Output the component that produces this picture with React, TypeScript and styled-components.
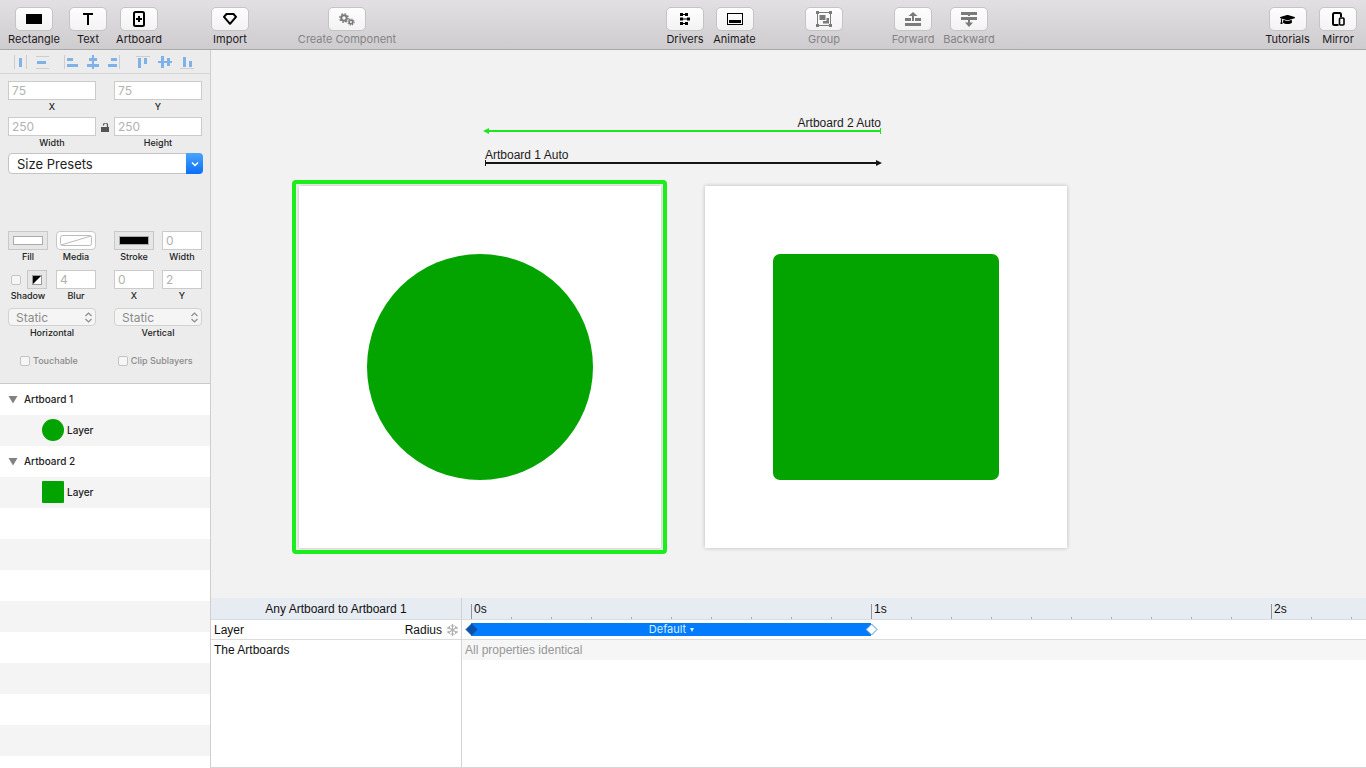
import React from "react";
import styled, { createGlobalStyle, css } from "styled-components";
import { FaGraduationCap } from "react-icons/fa";

const GlobalStyle = createGlobalStyle`
  *, *::before, *::after { box-sizing: border-box; }
  body { margin: 0; background: #fff; }
  button, input, select { font: inherit; color: inherit; margin: 0; }
`;

const ui = `Inter, "Liberation Sans", sans-serif`;
const helvetica = `"Liberation Sans", Arial, sans-serif`;
const GREEN = "#04a400";

const Page = styled.div`
  display: flex;
  flex-direction: column;
  min-height: 100vh;
  font-family: ${ui};
  font-size: 11px;
  color: #111;
`;

/* ---------- toolbar ---------- */

const Toolbar = styled.header`
  display: flex;
  justify-content: space-between;
  height: 50px;
  padding: 7px 9px 0 8px;
  background: linear-gradient(#e3e0e3, #cfcccf);
  border-bottom: 1px solid #a9a8a9;
`;

const ToolSection = styled.div`
  display: flex;
  gap: 49px;
`;

const ToolGroup = styled.div`
  display: flex;
  gap: 9px;
`;

const ToolButton = styled.button<{ $width: number }>`
  display: flex;
  flex-direction: column;
  align-items: center;
  gap: 1px;
  width: ${(p) => p.$width}px;
  padding: 0;
  border: 0;
  background: none;
  font-size: 11px;
  line-height: 14px;
  white-space: nowrap;
  color: #1c1a1c;
  &:disabled { color: #858385; }
`;

const ToolFace = styled.span`
  display: flex;
  align-items: center;
  justify-content: center;
  width: 38px;
  height: 24px;
  border: 1px solid #c6c3c6;
  border-radius: 5px;
  background: linear-gradient(#fefefe, #f4f3f4);
  color: #000;
  ${ToolButton}:disabled & { color: #7b7b7b; }
`;

const ToolLabel = styled.span`
  display: flex;
  justify-content: center;
  width: 0;
`;

function Tool(props: { label: string; width: number; disabled?: boolean; children: React.ReactNode }) {
  return (
    <ToolButton type="button" $width={props.width} disabled={props.disabled}>
      <ToolFace>{props.children}</ToolFace>
      <ToolLabel>{props.label}</ToolLabel>
    </ToolButton>
  );
}

const RectangleIcon = () => (
  <svg width="16" height="12" viewBox="0 0 16 12"><rect y="1" width="16" height="10" fill="currentColor" /></svg>
);
const TextIcon = () => (
  <svg width="12" height="14" viewBox="0 0 12 14"><path d="M1 2h10M6 2v11" stroke="currentColor" strokeWidth="2" fill="none" /></svg>
);
const ArtboardIcon = () => (
  <svg width="12" height="16" viewBox="0 0 12 16" fill="none" stroke="currentColor" strokeWidth="2">
    <rect x="1" y="1" width="10" height="14" rx="1.5" />
    <path d="M6 5v6M3 8h6" />
  </svg>
);
const ImportIcon = () => (
  <svg width="14" height="12" viewBox="0 0 14 12" fill="none" stroke="currentColor" strokeWidth="2" strokeLinejoin="round">
    <path d="M3.500 1h7L13 3.800 7 10.800 1 3.800z" />
  </svg>
);
const GearsIcon = () => (
  <svg width="16" height="13" viewBox="0 0 16 13" fill="none" stroke="currentColor">
    <circle cx="5" cy="5" r="2.700" strokeWidth="2" />
    <circle cx="5" cy="5" r="4.200" strokeWidth="1.400" strokeDasharray="1.700 1.600" />
    <circle cx="12" cy="9" r="1.800" strokeWidth="1.600" />
    <circle cx="12" cy="9" r="3" strokeWidth="1.200" strokeDasharray="1.300 1.056" />
  </svg>
);
const DriversIcon = () => (
  <svg width="12" height="14" viewBox="0 0 12 14" fill="currentColor">
    <path d="M1 2h8v1H1zM1 6.500h9v1H1zM1 11h8v1H1z" />
    <path d="M1 1h3v3H1zM6 1h3v3H6zM1 5.500h3v3H1zM8 5.500h3v3H8zM1 10h3v3H1zM6 10h3v3H6z" />
  </svg>
);
const AnimateIcon = () => (
  <svg width="16" height="12" viewBox="0 0 16 12">
    <rect x=".5" y=".5" width="15" height="11" fill="none" stroke="currentColor" />
    <rect x="2" y="7" width="12" height="3" fill="currentColor" />
  </svg>
);
const GroupIcon = () => (
  <svg width="16" height="16" viewBox="0 0 16 16" fill="currentColor">
    <rect x="1.500" y="1.500" width="13" height="13" fill="none" stroke="currentColor" />
    <path d="M0 0h3v3H0zM13 0h3v3h-3zM0 13h3v3H0zM13 13h3v3h-3z" />
    <path d="M3.500 4h6v5h-6z" />
    <path d="M10.500 7h2.500v5.500H7V10h3.500z" />
  </svg>
);
const ForwardIcon = () => (
  <svg width="16" height="14" viewBox="0 0 16 14" fill="currentColor">
    <path d="M8 0l4.500 4H9v5H7V4H3.500z" />
    <path d="M0 6h6v3H0zM10 6h6v3h-6zM0 11h16v3H0z" />
  </svg>
);
const BackwardIcon = () => (
  <svg width="16" height="15" viewBox="0 0 16 15" fill="currentColor">
    <path d="M0 0h16v3H0zM0 5h16v3H0z" />
    <path d="M7 3h2v1H7zM7 8h2v2.500h3L8 15l-4-4.500h3z" />
  </svg>
);
const MirrorIcon = () => (
  <svg width="13" height="14" viewBox="0 0 13 14" fill="none" stroke="currentColor" strokeWidth="2">
    <path d="M6.500 13H2.500A1.500 1.500 0 0 1 1 11.500v-9A1.500 1.500 0 0 1 2.500 1h5A1.500 1.500 0 0 1 9 2.500V5" />
    <rect x="7.500" y="6" width="4.500" height="7" rx="1" strokeWidth="1.600" />
  </svg>
);

/* ---------- inspector ---------- */

const Workspace = styled.div`
  display: flex;
  flex: 1;
`;

const Sidebar = styled.aside`
  display: flex;
  flex-direction: column;
  width: 211px;
  flex: none;
  border-right: 1px solid #cfcfcf;
  background: #ececec;
`;

const AlignBar = styled.div`
  display: flex;
  align-items: center;
  gap: 14px;
  height: 24px;
  padding: 0 14px;
  border-bottom: 1px solid #d5d5d5;
`;

const AlignGroup = styled.div`
  display: flex;
  gap: 8px;
`;

const IconButton = styled.button`
  display: flex;
  padding: 0;
  border: 0;
  background: none;
`;

type Bar = [number, number, number, number];
const alignGroups: { name: string; grey: Bar[]; blue: Bar[] }[][] = [
  [
    { name: "Distribute horizontally", grey: [[0, 0, 1, 14], [12, 0, 1, 14]], blue: [[5, 3, 3, 9]] },
    { name: "Distribute vertically", grey: [[0, 1, 13, 1], [0, 13, 13, 1]], blue: [[1, 6, 9, 3]] },
  ],
  [
    { name: "Align left", grey: [[0, 0, 1, 14]], blue: [[3, 3, 6, 3], [3, 9, 11, 3]] },
    { name: "Align centre", grey: [], blue: [[3, 3, 8, 3], [1, 9, 12, 3], [6, 0, 2, 14]] },
    { name: "Align right", grey: [[11, 0, 1, 14]], blue: [[3, 3, 6, 3], [0, 9, 9, 3]] },
  ],
  [
    { name: "Align top", grey: [[0, 1, 14, 1]], blue: [[2, 3, 3, 10], [8, 3, 3, 6]] },
    { name: "Align middle", grey: [], blue: [[3, 1, 3, 12], [9, 3, 3, 8], [0, 6, 14, 2]] },
    { name: "Align bottom", grey: [[0, 13, 14, 1]], blue: [[3, 2, 3, 10], [9, 6, 3, 6]] },
  ],
];

const Inspector = styled.div`
  display: flex;
  flex-direction: column;
  height: 310px;
  padding: 7px 8px 0;
  border-bottom: 1px solid #c9c9c9;
`;

const Columns = styled.div<{ $top?: number }>`
  display: grid;
  grid-template-columns: 1fr 18px 1fr;
  margin-top: ${(p) => p.$top ?? 0}px;
`;

const Quad = styled.div<{ $top: number }>`
  display: grid;
  grid-template-columns: 40px 40px 2px 40px 40px;
  column-gap: 8px;
  margin-top: ${(p) => p.$top}px;
  & > :nth-child(3) { grid-column: 4; }
`;

const Field = styled.div`
  display: flex;
  flex-direction: column;
  align-items: center;
  gap: 1px;
`;

const Caption = styled.label`
  font-size: 9px;
  line-height: 12px;
  white-space: nowrap;
  font-weight: 500;
  color: #222;
`;

const TextBox = styled.input`
  width: 100%;
  height: 19px;
  padding: 0 3px;
  border: 1px solid #cbcbcb;
  border-radius: 0;
  background: #fff;
  font-size: 12px;
  color: #b2b2b2;
  outline: none;
`;

const Lock = styled.span`
  display: flex;
  justify-content: center;
  padding-top: 6px;
`;

const SelectWrap = styled.div<{ $top?: number }>`
  position: relative;
  width: 100%;
  margin-top: ${(p) => p.$top ?? 0}px;
`;

const selectReset = css`
  appearance: none;
  width: 100%;
  outline: none;
  display: block;
`;

const PresetSelect = styled.select`
  ${selectReset}
  height: 21px;
  padding: 0 8px;
  border: 1px solid #c4c4c4;
  border-radius: 4px;
  background: #fff;
  font-size: 13px;
  color: #222;
`;

const PresetArrow = styled.span`
  position: absolute;
  inset: 0 -1px 0 auto;
  display: flex;
  align-items: center;
  justify-content: center;
  width: 17px;
  border-radius: 0 4px 4px 0;
  background: linear-gradient(#4ba4fa, #0a6ff8);
  pointer-events: none;
`;

const MiniSelect = styled.select`
  ${selectReset}
  height: 18px;
  padding: 0 7px;
  border: 1px solid #d2d2d2;
  border-radius: 4px;
  background: #f5f5f5;
  font-size: 12px;
  color: #8b8b8b;
`;

const Stepper = styled.svg`
  position: absolute;
  top: 4px;
  right: 3px;
  pointer-events: none;
`;

const Well = styled.button<{ $round?: boolean; $width?: number }>`
  display: flex;
  align-items: center;
  justify-content: center;
  width: ${(p) => p.$width ?? 40}px;
  height: 19px;
  padding: 0;
  border: 1px solid #c8c8c8;
  border-radius: ${(p) => (p.$round ? 4 : 0)}px;
  background: ${(p) => (p.$round ? "#fdfdfd" : "#e6e6e6")};
`;

const Swatch = styled.span<{ $color: string }>`
  width: 30px;
  height: 9px;
  border: 1px solid #aaa;
  background: ${(p) => p.$color};
`;

const ShadowControls = styled.div`
  display: flex;
  align-items: center;
  justify-content: space-between;
  width: 100%;
  height: 19px;
  padding: 0 1px 0 3px;
`;

const TickBox = styled.input`
  appearance: none;
  width: 10px;
  height: 10px;
  border: 1px solid #c3c3c3;
  border-radius: 2px;
  background: #f6f6f6;
`;

const TickRow = styled.div`
  display: flex;
  gap: 40px;
  margin-top: 15px;
  padding-left: 12px;
`;

const TickLabel = styled.label`
  display: flex;
  align-items: center;
  gap: 3px;
  font-size: 9px;
  line-height: 14px;
  white-space: nowrap;
  font-weight: 500;
  color: #8b8b8b;
`;

/* ---------- layer list ---------- */

const LayerList = styled.ul`
  flex: 1;
  margin: 0;
  padding: 0;
  list-style: none;
  background: repeating-linear-gradient(#fff 0 31px, #f4f4f4 31px 62px);
`;

const LayerRow = styled.li<{ $depth: number }>`
  display: flex;
  align-items: center;
  gap: ${(p) => (p.$depth ? 3 : 6)}px;
  height: 31px;
  padding: 0 0 1px ${(p) => (p.$depth ? 42 : 8)}px;
  font-size: 10px;
  font-weight: 500;
  color: #222;
`;

const Thumb = styled.span<{ $round?: boolean }>`
  width: 22px;
  height: 22px;
  border-radius: ${(p) => (p.$round ? "50%" : "1px")};
  background: ${GREEN};
`;

/* ---------- canvas ---------- */

const Main = styled.main`
  display: flex;
  flex-direction: column;
  flex: 1;
  min-width: 0;
`;

const Canvas = styled.section`
  position: relative;
  flex: 1;
  min-height: 520px;
  overflow: hidden;
  background: #f2f2f2;
  font-family: ${helvetica};
  font-size: 12px;
  line-height: 14px;
`;

const Artboard = styled.div<{ $x: number }>`
  position: absolute;
  left: ${(p) => p.$x}px;
  top: 136px;
  display: flex;
  align-items: center;
  justify-content: center;
  width: 362px;
  height: 362px;
  background: #fff;
  box-shadow: 0 0 4px rgba(0, 0, 0, 0.24);
`;

const Selection = styled.div`
  position: absolute;
  inset: -6px -6px -6px -7px;
  border: 4px solid #1bee1b;
  border-radius: 4px;
`;

const Shape = styled.div<{ $round?: boolean }>`
  width: 226px;
  height: 226px;
  border-radius: ${(p) => (p.$round ? "50%" : "7px")};
  background: ${GREEN};
`;

const Transition = styled.div<{ $y: number; $end?: boolean }>`
  position: absolute;
  left: 272px;
  top: ${(p) => p.$y}px;
  display: flex;
  flex-direction: column;
  align-items: ${(p) => (p.$end ? "flex-end" : "flex-start")};
  width: 400px;
  color: #1c1c1c;
`;

const TransitionName = styled.span`
  height: 12px;
  padding: 0 2px;
`;

/* ---------- timeline ---------- */

const Timeline = styled.section`
  display: grid;
  grid-template-columns: 251px 1fr;
  grid-template-rows: 22px 20px 20px 1fr;
  height: 170px;
  background: #fff;
  border-bottom: 1px solid #d6d6d6;
  font-family: ${helvetica};
  font-size: 12px;
`;

const HeadCell = styled.div`
  display: flex;
  align-items: center;
  justify-content: center;
  border-right: 1px solid #d0d2d4;
  border-bottom: 1px solid #d9dde0;
  background: #e6ecf1;
`;

const Ruler = styled.div`
  display: flex;
  min-width: 0;
  padding-left: 9px;
  border-bottom: 1px solid #d9dde0;
  background: #e6ecf1;
`;

const Second = styled.div`
  flex: none;
  width: 400px;
  height: 21px;
  padding: 4px 0 0 3px;
  line-height: 14px;
  background:
    linear-gradient(#929598, #929598) 0 6px / 1px 15px no-repeat,
    repeating-linear-gradient(90deg, #a9acaf 0 1px, transparent 1px 40px) 0 19px / 100% 2px no-repeat;
  &:last-child { flex: 1; width: auto; }
`;

const NameCell = styled.div<{ $line?: boolean }>`
  display: flex;
  align-items: center;
  justify-content: space-between;
  padding: 0 3px;
  border-right: 1px solid #d4d4d4;
  border-bottom: ${(p) => (p.$line ? "1px solid #dcdcdc" : "0")};
`;

const Property = styled.span`
  display: flex;
  align-items: center;
  gap: 5px;
`;

const Track = styled.div<{ $line?: boolean; $muted?: boolean }>`
  display: flex;
  align-items: center;
  padding-left: 3px;
  border-bottom: ${(p) => (p.$line ? "1px solid #dcdcdc" : "0")};
  background: ${(p) => (p.$muted ? "#f6f6f6" : "#fff")};
  color: #969696;
`;

const Clip = styled.div`
  display: flex;
  align-items: center;
  justify-content: space-between;
  width: 413px;
  height: 13px;
  background: linear-gradient(#027bfc, #027bfc) 6px 0 / 400px 13px no-repeat;
`;

const EaseButton = styled.button`
  display: flex;
  align-items: center;
  gap: 4px;
  height: 13px;
  padding: 0;
  border: 0;
  background: none;
  font-family: ${ui};
  font-size: 11px;
  line-height: 13px;
  color: #d9f0ff;
`;

const Diamond = ({ fill, stroke }: { fill: string; stroke: string }) => (
  <svg width="13" height="13" viewBox="0 0 13 13"><path d="M6.500 1l5.500 5.500-5.500 5.500L1 6.500z" fill={fill} stroke={stroke} /></svg>
);

const Snowflake = () => (
  <svg width="11" height="12" viewBox="0 0 11 12" fill="none" stroke="#b0b0b0">
    <path d="M5.500 0v12M.5 3l10 6M10.500 3l-10 6" strokeWidth="1.200" />
    <path d="M3.500 1l2 2 2-2M3.500 11l2-2 2 2M.3 4.800l2-.8.200-2M10.700 4.800l-2-.8-.2-2M.3 7.200l2 .8.200 2M10.700 7.200l-2 .8-.2 2" />
  </svg>
);

function NumberField({ id, label, value }: { id: string; label: string; value: string }) {
  return (
    <Field>
      <TextBox id={id} defaultValue={value} />
      <Caption htmlFor={id}>{label}</Caption>
    </Field>
  );
}

function StaticSelect({ id, label }: { id: string; label: string }) {
  return (
    <Field>
      <SelectWrap>
        <MiniSelect id={id}><option>Static</option></MiniSelect>
        <Stepper width="9" height="11" viewBox="0 0 9 11" fill="none" stroke="#8c8c8c" strokeWidth="1.200">
          <path d="M1.500 4l3-3 3 3M1.500 7l3 3 3-3" />
        </Stepper>
      </SelectWrap>
      <Caption htmlFor={id}>{label}</Caption>
    </Field>
  );
}

function LayerGroup({ name, round }: { name: string; round?: boolean }) {
  return (
    <>
      <LayerRow $depth={0}>
        <svg width="10" height="9" viewBox="0 0 10 9"><path d="M.5 1h9L5 8.500z" fill="#828282" /></svg>
        {name}
      </LayerRow>
      <LayerRow $depth={1}><Thumb $round={round} />Layer</LayerRow>
    </>
  );
}

export default function App() {
  return (
    <Page>
      <GlobalStyle />
      <Toolbar>
        <ToolSection>
          <ToolGroup>
            <Tool label="Rectangle" width={52}><RectangleIcon /></Tool>
            <Tool label="Text" width={38}><TextIcon /></Tool>
            <Tool label="Artboard" width={46}><ArtboardIcon /></Tool>
          </ToolGroup>
          <Tool label="Import" width={38}><ImportIcon /></Tool>
          <Tool label="Create Component" width={98} disabled><GearsIcon /></Tool>
        </ToolSection>
        <ToolSection>
          <ToolGroup>
            <Tool label="Drivers" width={38}><DriversIcon /></Tool>
            <Tool label="Animate" width={43}><AnimateIcon /></Tool>
          </ToolGroup>
          <Tool label="Group" width={38} disabled><GroupIcon /></Tool>
          <ToolGroup>
            <Tool label="Forward" width={42} disabled><ForwardIcon /></Tool>
            <Tool label="Backward" width={52} disabled><BackwardIcon /></Tool>
          </ToolGroup>
        </ToolSection>
        <ToolGroup>
          <Tool label="Tutorials" width={45}><FaGraduationCap size={15} /></Tool>
          <Tool label="Mirror" width={38}><MirrorIcon /></Tool>
        </ToolGroup>
      </Toolbar>

      <Workspace>
        <Sidebar>
          <AlignBar>
            {alignGroups.map((group, i) => (
              <AlignGroup key={i}>
                {group.map((a) => (
                  <IconButton key={a.name} type="button" aria-label={a.name}>
                    <svg width="14" height="14" viewBox="0 0 14 14">
                      {a.grey.map(([x, y, w, h], k) => <rect key={k} x={x} y={y} width={w} height={h} fill="#cdcdcd" />)}
                      {a.blue.map(([x, y, w, h], k) => <rect key={k} x={x} y={y} width={w} height={h} fill="#7fb2e8" />)}
                    </svg>
                  </IconButton>
                ))}
              </AlignGroup>
            ))}
          </AlignBar>
          <Inspector>
            <Columns>
              <NumberField id="x" label="X" value="75" />
              <span />
              <NumberField id="y" label="Y" value="75" />
            </Columns>
            <Columns $top={4}>
              <NumberField id="width" label="Width" value="250" />
              <Lock>
                <svg width="8" height="9" viewBox="0 0 8 9"><path d="M0 4h8v5H0z" fill="#555" /><path d="M2.500 2.500V2a2 2 0 0 1 4 0v2" fill="none" stroke="#555" strokeWidth="1.200" /></svg>
              </Lock>
              <NumberField id="height" label="Height" value="250" />
            </Columns>
            <SelectWrap $top={4}>
              <PresetSelect aria-label="Size Presets"><option>Size Presets</option></PresetSelect>
              <PresetArrow>
                <svg width="8" height="6" viewBox="0 0 8 6"><path d="M1 1.500l3 3 3-3" fill="none" stroke="#fff" strokeWidth="1.500" /></svg>
              </PresetArrow>
            </SelectWrap>
            <Quad $top={57}>
              <Field>
                <Well type="button" id="fill"><Swatch $color="#fff" /></Well>
                <Caption htmlFor="fill">Fill</Caption>
              </Field>
              <Field>
                <Well type="button" id="media" $round>
                  <svg width="32" height="11" viewBox="0 0 32 11" fill="none" stroke="#bbb"><rect x=".5" y=".5" width="31" height="10" rx="2" /><path d="M1 10L31 1" /></svg>
                </Well>
                <Caption htmlFor="media">Media</Caption>
              </Field>
              <Field>
                <Well type="button" id="stroke"><Swatch $color="#000" /></Well>
                <Caption htmlFor="stroke">Stroke</Caption>
              </Field>
              <NumberField id="stroke-width" label="Width" value="0" />
            </Quad>
            <Quad $top={7}>
              <Field>
                <ShadowControls>
                  <TickBox type="checkbox" id="shadow" />
                  <Well type="button" aria-label="Shadow colour" $width={20}>
                    <svg width="10" height="10" viewBox="0 0 10 10"><rect x=".5" y=".5" width="9" height="9" fill="#fff" stroke="#999" /><path d="M1 1h8L1 9z" /></svg>
                  </Well>
                </ShadowControls>
                <Caption htmlFor="shadow">Shadow</Caption>
              </Field>
              <NumberField id="blur" label="Blur" value="4" />
              <NumberField id="shadow-x" label="X" value="0" />
              <NumberField id="shadow-y" label="Y" value="2" />
            </Quad>
            <Columns $top={6}>
              <StaticSelect id="horizontal" label="Horizontal" />
              <span />
              <StaticSelect id="vertical" label="Vertical" />
            </Columns>
            <TickRow>
              <TickLabel><TickBox type="checkbox" />Touchable</TickLabel>
              <TickLabel><TickBox type="checkbox" />Clip Sublayers</TickLabel>
            </TickRow>
          </Inspector>
          <LayerList>
            <LayerGroup name="Artboard 1" round />
            <LayerGroup name="Artboard 2" />
          </LayerList>
        </Sidebar>

        <Main>
          <Canvas>
            <Transition $y={66} $end>
              <TransitionName>Artboard 2 Auto</TransitionName>
              <svg width="400" height="7" viewBox="0 0 400 7"><path d="M0 3L6 0v6zM5 2h393v2H5zM397 0h1v6h-1z" fill="#1fe61f" /></svg>
            </Transition>
            <Transition $y={98}>
              <TransitionName>Artboard 1 Auto</TransitionName>
              <svg width="400" height="7" viewBox="0 0 400 7" fill="#161616"><path d="M2 0h1v6H2zM2 2h393v2H2zM393 0l6 3-6 3z" /></svg>
            </Transition>
            <Artboard $x={88}><Selection /><Shape $round /></Artboard>
            <Artboard $x={494}><Shape /></Artboard>
          </Canvas>
          <Timeline>
            <HeadCell>Any Artboard to Artboard 1</HeadCell>
            <Ruler>
              {[0, 1, 2].map((s) => <Second key={s}>{s}s</Second>)}
            </Ruler>
            <NameCell $line>
              <span>Layer</span>
              <Property>Radius <Snowflake /></Property>
            </NameCell>
            <Track $line>
              <Clip>
                <Diamond fill="#0d50a8" stroke="#0d50a8" />
                <EaseButton type="button">
                  Default
                  <svg width="4" height="4" viewBox="0 0 4 4"><path d="M0 0h4L2 4z" fill="currentColor" /></svg>
                </EaseButton>
                <Diamond fill="#fff" stroke="#3c93d8" />
              </Clip>
            </Track>
            <NameCell>The Artboards</NameCell>
            <Track $muted>All properties identical</Track>
            <NameCell />
            <Track />
          </Timeline>
        </Main>
      </Workspace>
    </Page>
  );
}
